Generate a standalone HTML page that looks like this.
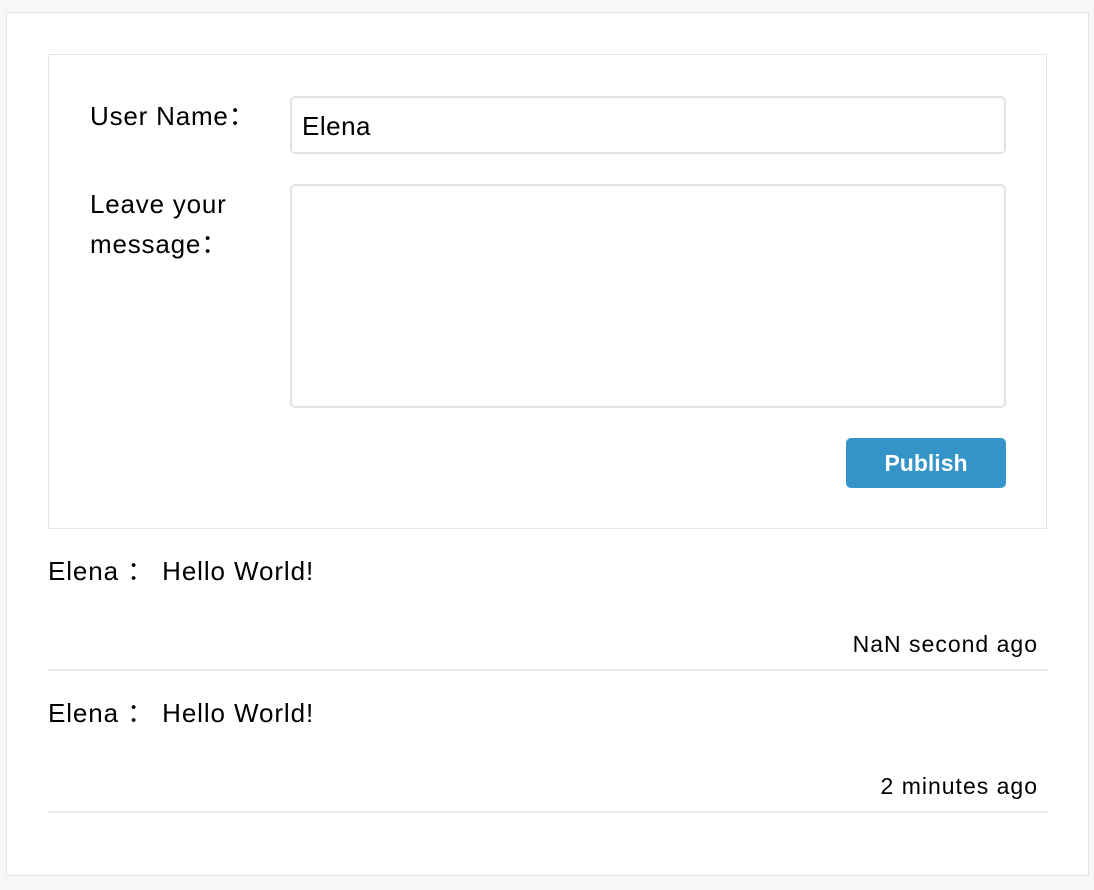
<!DOCTYPE html>
<html><head><meta charset="utf-8"><style>
body{margin:0;background:#f7f7f7;width:1094px;height:890px;position:relative;font-family:"Liberation Sans","Noto Sans CJK SC",sans-serif;color:#000;overflow:hidden}
.abs{position:absolute}
.outer{left:6px;top:12px;width:1081px;height:862px;background:#fff;border:1px solid #e5e5e5}
.form{left:48px;top:54px;width:997px;height:473px;border:1px solid #e5e5e5;background:#fff}
.inp{border:2px solid #e2e2e2;border-radius:5px;background:#fff;box-sizing:border-box}
.lbl{font-size:26px;line-height:40px;letter-spacing:0.8px}
.btn{left:846px;top:438px;width:160px;height:50px;background:#3494c8;border-radius:5px;color:#fff;font-weight:bold;font-size:23px;line-height:50px;text-align:center}
.line{left:48px;width:1000px;height:2px;background:#ebebeb}
.c{font-size:26px;line-height:30px;left:48px;white-space:pre;letter-spacing:0.9px}
.t{font-size:23px;right:56px;line-height:30px;letter-spacing:1px}
</style></head><body>
<div class="abs outer"></div>
<div class="abs form"></div>
<div class="abs lbl" style="left:90px;top:96px">User Name：</div>
<div class="abs inp" style="left:290px;top:96px;width:716px;height:58px"></div>
<div class="abs" style="left:302px;top:108px;font-size:26px;line-height:36px;letter-spacing:0.5px">Elena</div>
<div class="abs lbl" style="left:90px;top:184px">Leave your<br>message：</div>
<div class="abs inp" style="left:290px;top:184px;width:716px;height:224px"></div>
<div class="abs btn">Publish</div>
<div class="abs c" style="top:556px">Elena ： Hello World!</div>
<div class="abs t" style="top:629px">NaN second ago</div>
<div class="abs line" style="top:669px"></div>
<div class="abs c" style="top:698px">Elena ： Hello World!</div>
<div class="abs t" style="top:771px">2 minutes ago</div>
<div class="abs line" style="top:811px"></div>
</body></html>
